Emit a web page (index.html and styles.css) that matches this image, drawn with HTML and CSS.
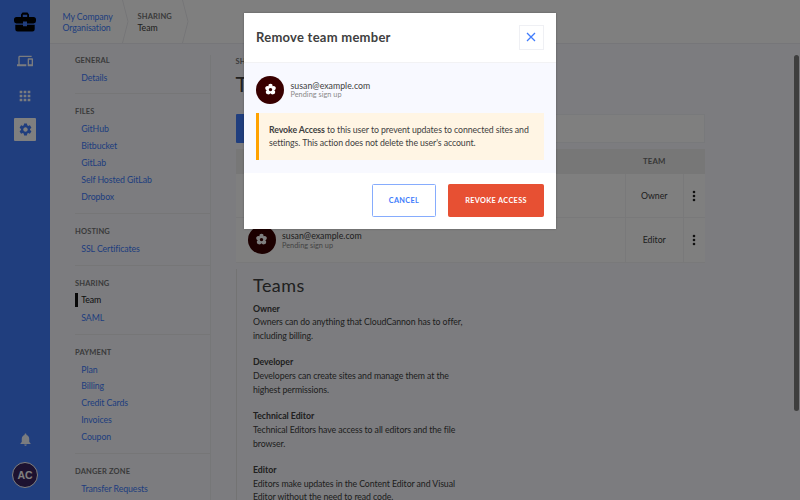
FILE: index.html
```html
<!DOCTYPE html>
<html lang="en">
<head>
<meta charset="utf-8">
<title>Team</title>
<link rel="stylesheet" href="styles.css">
</head>
<body>
<svg width="0" height="0" class="defs">
  <symbol id="flower" viewBox="0 0 24 24"><path fill="currentColor" fill-rule="evenodd" d="M12 1.500a4 4 0 0 1 4 4.300 4 4 0 0 1 5.600 4.800 4 4 0 0 1-2.700 2.700 4.100 4.100 0 0 1-2.300 7.500 4.100 4.100 0 0 1-4.600-1.700 4.100 4.100 0 0 1-4.600 1.700 4.100 4.100 0 0 1-2.300-7.500 4 4 0 0 1-2.700-2.700A4 4 0 0 1 8 5.800a4 4 0 0 1 4-4.300zm0 7.500a3.200 3.200 0 1 0 0 6.400 3.200 3.200 0 0 0 0-6.400z"/></symbol>
</svg>
<div class="app">
  <aside class="rail">
    <svg class="rail-logo" viewBox="0 0 22 20"><path fill-rule="evenodd" d="M7 5V2.500L8.500.500h5L15 2.500V5h4.500Q22 5 22 7.500V9q0 2.400-2.500 2.400H13V9.500H9v1.900H2.500Q0 11.400 0 9V7.500Q0 5 2.500 5zm1.800 0h4.400V2.700H8.800z"/><path d="M1.300 12.800H9v1.400h4v-1.400h7.700v4.400q0 2.300-2.300 2.300H3.600q-2.300 0-2.300-2.300z"/></svg>
    <svg class="rail-icon sites" viewBox="0 0 24 24"><path d="M4 6h18V4H4c-1.100 0-2 .9-2 2v11H0v3h14v-3H4V6zm19 2h-6c-.55 0-1 .45-1 1v10c0 .55.45 1 1 1h6c.55 0 1-.45 1-1V9c0-.55-.45-1-1-1zm-1 9h-4v-7h4v7z"/></svg>
    <svg class="rail-icon apps" viewBox="0 0 24 24"><path d="M4 8h4V4H4v4zm6 12h4v-4h-4v4zm-6 0h4v-4H4v4zm0-6h4v-4H4v4zm6 0h4v-4h-4v4zm6-10v4h4V4h-4zm-6 4h4V4h-4v4zm6 6h4v-4h-4v4zm0 6h4v-4h-4v4z"/></svg>
    <div class="rail-active"><svg viewBox="0 0 24 24"><path d="M19.140 12.940c.04-.3.060-.610.060-.940 0-.320-.020-.640-.070-.940l2.030-1.580c.180-.140.230-.410.120-.610l-1.920-3.320c-.120-.220-.370-.290-.590-.220l-2.390.960c-.500-.380-1.030-.700-1.620-.940l-.360-2.540c-.040-.240-.240-.410-.480-.410h-3.840c-.240 0-.430.170-.470.410l-.360 2.540c-.590.240-1.130.570-1.620.940l-2.390-.960c-.220-.080-.470 0-.590.220L2.740 8.870c-.120.210-.080.470.120.610l2.030 1.580c-.050.300-.090.630-.090.940s.020.640.070.940l-2.030 1.580c-.180.140-.230.410-.120.610l1.920 3.320c.120.220.370.290.590.220l2.390-.960c.500.380 1.030.700 1.620.940l.360 2.540c.050.240.240.410.480.410h3.840c.240 0 .440-.170.470-.410l.360-2.540c.590-.240 1.130-.560 1.620-.940l2.390.960c.220.080.470 0 .590-.220l1.920-3.320c.120-.220.070-.470-.120-.610l-2.010-1.580zM12 15.600c-1.980 0-3.600-1.620-3.600-3.600s1.620-3.600 3.600-3.600 3.600 1.620 3.600 3.600-1.620 3.600-3.600 3.600z"/></svg></div>
    <svg class="rail-icon bell" viewBox="0 0 24 24"><path d="M12 22c1.100 0 2-.9 2-2h-4c0 1.100.89 2 2 2zm6-6v-5c0-3.070-1.640-5.640-4.500-6.320V4c0-.83-.67-1.500-1.500-1.500s-1.500.67-1.500 1.500v.68C7.630 5.360 6 7.920 6 11v5l-2 2v1h16v-1l-2-2z"/></svg>
    <div class="rail-user">AC</div>
  </aside>
  <div class="page">
    <header class="crumbs">
      <div class="crumb company"><a>My Company<br>Organisation</a></div>
      <svg class="chevron" viewBox="0 0 8 43"><path d="M1.500 0 7 21.500 1.500 43"/></svg>
      <div class="crumb current"><b>SHARING</b><span>Team</span></div>
      <svg class="chevron" viewBox="0 0 8 43"><path d="M1.500 0 7 21.500 1.500 43"/></svg>
    </header>
    <div class="columns">
      <nav class="menu">
        <section><h4>GENERAL</h4><a>Details</a></section>
        <section><h4>FILES</h4><a>GitHub</a><a>Bitbucket</a><a>GitLab</a><a>Self Hosted GitLab</a><a>Dropbox</a></section>
        <section><h4>HOSTING</h4><a>SSL Certificates</a></section>
        <section><h4>SHARING</h4><a class="selected">Team</a><a>SAML</a></section>
        <section><h4>PAYMENT</h4><a>Plan</a><a>Billing</a><a>Credit Cards</a><a>Invoices</a><a>Coupon</a></section>
        <section><h4>DANGER ZONE</h4><a>Transfer Requests</a></section>
      </nav>
      <main class="main">
        <h4>SHARING</h4>
        <h1>Team</h1>
        <div class="tools"><div class="add"></div><div class="search"></div></div>
        <div class="table">
          <div class="row head"><div></div><div class="role">TEAM</div><div></div></div>
          <div class="row"><div class="member"></div><div class="role">Owner</div><div class="more"><svg viewBox="0 0 4 12"><circle cx="2" cy="2" r="1.300"/><circle cx="2" cy="6" r="1.300"/><circle cx="2" cy="10" r="1.300"/></svg></div></div>
          <div class="row"><div class="member"><div class="avatar"><svg><use href="#flower"/></svg></div><div class="who"><span>susan@example.com</span><small>Pending sign up</small></div></div><div class="role">Editor</div><div class="more"><svg viewBox="0 0 4 12"><circle cx="2" cy="2" r="1.300"/><circle cx="2" cy="6" r="1.300"/><circle cx="2" cy="10" r="1.300"/></svg></div></div>
        </div>
        <div class="teams">
          <h2>Teams</h2>
          <p><b>Owner</b><br>Owners can do anything that CloudCannon has to offer,<br>including billing.</p>
          <p><b>Developer</b><br>Developers can create sites and manage them at the<br>highest permissions.</p>
          <p><b>Technical Editor</b><br>Technical Editors have access to all editors and the file<br>browser.</p>
          <p><b>Editor</b><br>Editors make updates in the Content Editor and Visual<br>Editor without the need to read code.</p>
        </div>
      </main>
    </div>
  </div>
  <div class="scrollbar"></div>
</div>
<div class="backdrop">
  <div class="modal">
    <div class="modal-head"><h3>Remove team member</h3><div class="close"><svg viewBox="0 0 10 10"><path d="M1 1l8 8M9 1l-8 8"/></svg></div></div>
    <div class="modal-body">
      <div class="member"><div class="avatar"><svg><use href="#flower"/></svg></div><div class="who"><span>susan@example.com</span><small>Pending sign up</small></div></div>
      <div class="alert"><b>Revoke Access</b> to this user to prevent updates to connected sites and<br>settings. This action does not delete the user's account.</div>
    </div>
    <div class="modal-foot"><div class="btn cancel">CANCEL</div><div class="btn revoke">REVOKE ACCESS</div></div>
  </div>
</div>
</body>
</html>
```
FILE: styles.css
```css
* { box-sizing: border-box; }
body { margin: 0; width: 800px; height: 500px; overflow: hidden; font: 8.75px/13.75px Lato, "Open Sans", sans-serif; color: #404040; }
h1, h2, h3, h4, p { margin: 0; }
.defs { display: block; position: absolute; }
svg { display: block; }
.app { display: flex; width: 800px; height: 500px; overflow: hidden; background: #f8f9ff; position: relative; }

.rail { width: 50px; height: 500px; flex: none; background: #407cfc; display: flex; flex-direction: column; align-items: center; padding: 12px 0; }
.rail-logo { width: 22px; height: 20px; }
.rail-icon { fill: #fff; opacity: .95; }
.sites { width: 16px; height: 16px; margin-top: 21px; }
.apps { width: 16px; height: 16px; margin-top: 18.500px; }
.rail-active { width: 22.500px; height: 22.500px; margin-top: 14.800px; background: #fff; border-radius: 1px; display: grid; place-items: center; }
.rail-active svg { width: 15px; height: 15px; fill: #407cfc; }
.bell { width: 15px; height: 15px; margin-top: auto; }
.rail-user { width: 26px; height: 26px; flex: none; margin-top: 15px; border: 1px solid #fff; border-radius: 50%; background: #3a2460; color: #fff; font: bold 10.500px/24px "Liberation Sans", sans-serif; text-align: center; }

.page { flex: 1; display: flex; flex-direction: column; overflow: hidden; }
.crumbs { height: 43.500px; flex: none; display: flex; background: #fff; border-bottom: 1px solid #ecedf2; }
.crumb { padding-top: 10.600px; line-height: 11.200px; white-space: nowrap; }
.company { width: 70.500px; padding-left: 12.500px; }
.company a { letter-spacing: -.080px; }
.current { width: 52px; padding-left: 9px; }
.crumb b, .crumb span { display: block; }
.crumb b, h4 { font-size: 7.500px; font-weight: 700; letter-spacing: .15px; color: #757575; }
.chevron { width: 8px; height: 43px; fill: none; stroke: #ebebef; }
a { color: #407cfc; }

.columns { display: flex; flex: 1; min-height: 0; padding-left: 25px; }
.menu { width: 136px; flex: none; margin-top: 11.500px; border-right: 1px solid #edeef0; height: 460px; }
.menu section { border-bottom: 1px solid #ecedee; padding: 10px 0 8px; }
.menu section:first-child { padding-top: 0; margin-top: -2.500px; }
.menu h4 { height: 16px; line-height: 16.800px; }
.menu a { display: block; height: 16.900px; line-height: 17.700px; padding-left: 6.300px; letter-spacing: -.090px; }
.menu .selected { color: #202020; padding-left: 3.300px; border-left: 3px solid #111; line-height: 14.700px; height: 13.900px; margin: 1.500px 0; }

.main { width: 469px; margin-left: 24.500px; padding-top: 9px; }
.main h4 { line-height: 17px; height: 16px; }
.main h1 { font-size: 21px; font-weight: 400; line-height: 30px; height: 45.500px; }
.tools { display: flex; height: 28.500px; }
.add { width: 90px; background: #407cfc; border-radius: 1px; }
.search { flex: 1; margin-left: 12px; background: #fff; border: 1px solid #f1f2f6; }
.table { margin-top: 6.500px; }
.row { display: grid; grid-template-columns: 389.500px 57.500px 1fr; height: 44.250px; background: #fff; border-bottom: 1px solid #f2f2f5; }
.row > div { display: flex; align-items: center; }
.row > div + div { border-left: 1px solid #f2f2f5; justify-content: center; }
.row.head { height: 25px; background: #eee; border: 0; font-size: 7.800px; font-weight: 700; letter-spacing: .2px; color: #707070; }
.row.head > div { border: 0; }
.row.head .role { padding: 1px 0 0 1px; }
.more svg { width: 4px; height: 12px; fill: #222; }
.row .member { padding-left: 12px; }
.member { display: flex; align-items: center; }
.avatar { width: 28px; height: 28px; flex: none; border-radius: 50%; background: #380000; color: #fff; display: grid; place-items: center; }
.avatar svg { width: 13px; height: 13px; }
.who { margin-left: 6.500px; line-height: 9.500px; padding-top: 1.500px; }
.who span, .who small { display: block; white-space: nowrap; }
.who small { font-size: 7.300px; color: #888; letter-spacing: .040px; }
.who span { letter-spacing: .020px; }
.teams { margin-top: 6px; padding: 5px 0 0 16.500px; height: 260px; border-left: 1px solid #e7e7e7; white-space: nowrap; }
.teams h2 { font-size: 18px; font-weight: 400; line-height: 22px; margin-bottom: 6.200px; letter-spacing: .450px; }
.teams p { margin-bottom: 12.500px; letter-spacing: -.085px; }
.teams b { letter-spacing: -.030px; }
.scrollbar { position: absolute; right: 1px; top: 55px; width: 5px; height: 356px; border-radius: 3px; background: #7c7c7c; }

.backdrop { position: absolute; inset: 0; background: rgba(0, 0, 0, .5); padding: 12.500px 0 0 244px; }
.modal { width: 312px; height: 216px; background: #fff; box-shadow: 0 0 2px rgba(0, 0, 0, .3); }
.modal-head { height: 50px; border-bottom: 1px solid #f2f2f4; display: flex; align-items: center; justify-content: space-between; padding: 0 12.500px 0 12px; }
.modal-head h3 { font-size: 13px; font-weight: 700; letter-spacing: .260px; padding-top: 2px; }
.close { width: 25px; height: 25px; border: 1px solid #eff0f4; display: grid; place-items: center; }
.close svg { width: 10px; height: 10px; stroke: #407cfc; stroke-width: 1.300; fill: none; }
.modal-body { height: 110px; background: #f8f9ff; padding: 13px 12px 0 12px; }
.alert { margin-top: 9.500px; height: 46.500px; border-left: 3px solid #ffa200; background: #fff5e4; padding: 9.500px 0 0 10px; white-space: nowrap; letter-spacing: -.085px; }
.modal-foot { display: flex; justify-content: flex-end; gap: 12px; padding: 11.500px 12px 0; }
.btn { height: 33px; line-height: 32px; border: 1px solid #86acfd; border-radius: 1.500px; color: #407cfc; font-size: 7.300px; font-weight: 700; letter-spacing: .360px; text-align: center; }
.cancel { width: 64px; }
.revoke { width: 96px; background: #e75033; border-color: #e75033; color: #fff; }
```
